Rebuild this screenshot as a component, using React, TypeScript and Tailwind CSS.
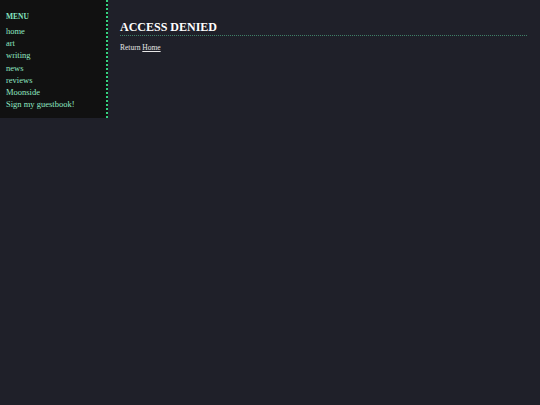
export default function App() {
  const links = ['home', 'art', 'writing', 'news', 'reviews', 'Moonside', 'Sign my guestbook!'];

  return (
    <div
      className="flex min-h-[405px] items-start bg-[#1f2029] text-white"
      style={{ fontFamily: '"Liberation Serif", "Times New Roman", serif' }}
    >
      <nav className="w-[108px] shrink-0 border-r-[2px] border-dotted border-r-[#35d27f] bg-[#111111] pb-[8px] pl-[6px] pt-[11px]">
        <div className="text-[7.5px] font-bold leading-[12px] text-[#86e6c0]">MENU</div>
        <ul className="mt-[2px]">
          {links.map((l) => (
            <li key={l} className="text-[8.5px] leading-[12.2px] text-[#8ee8c2]">
              <a href="#">{l}</a>
            </li>
          ))}
        </ul>
      </nav>

      <main className="flex-1 pl-[12px] pr-[13px] pt-[20px]">
        <h1 className="border-b border-dotted border-b-[#3f8068] pb-[1px] text-[12px] font-bold leading-[14px] text-white">
          ACCESS DENIED
        </h1>
        <p className="mt-[7px] text-[7.5px] leading-[10px] text-[#e6e6e6]">
          Return <a href="#" className="underline">Home</a>
        </p>
      </main>
    </div>
  );
}
